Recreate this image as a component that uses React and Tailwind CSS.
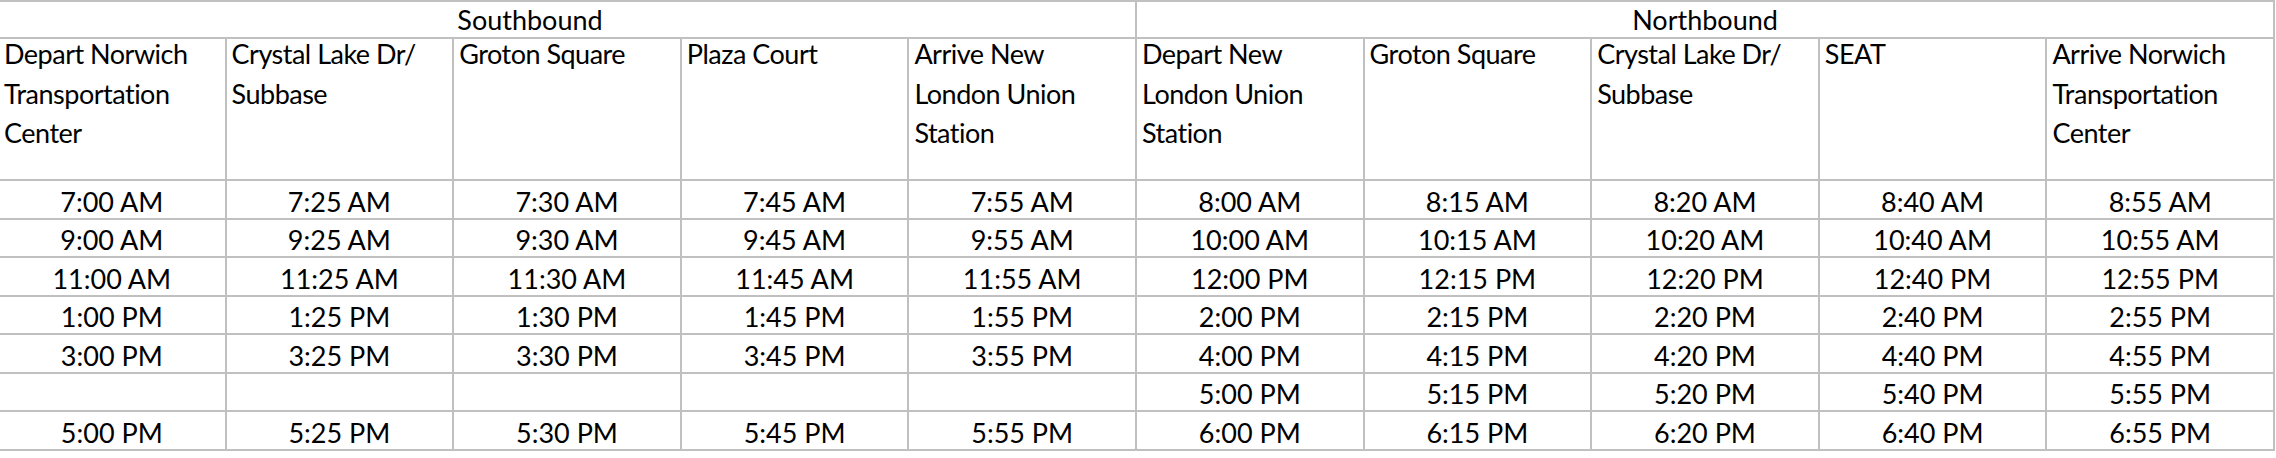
import React from 'react';

const headers = [
  ['Depart Norwich', 'Transportation', 'Center'],
  ['Crystal Lake Dr/', 'Subbase'],
  ['Groton Square'],
  ['Plaza Court'],
  ['Arrive New', 'London Union', 'Station'],
  ['Depart New', 'London Union', 'Station'],
  ['Groton Square'],
  ['Crystal Lake Dr/', 'Subbase'],
  ['SEAT'],
  ['Arrive Norwich', 'Transportation', 'Center'],
];

const rows = [
  ['7:00 AM', '7:25 AM', '7:30 AM', '7:45 AM', '7:55 AM', '8:00 AM', '8:15 AM', '8:20 AM', '8:40 AM', '8:55 AM'],
  ['9:00 AM', '9:25 AM', '9:30 AM', '9:45 AM', '9:55 AM', '10:00 AM', '10:15 AM', '10:20 AM', '10:40 AM', '10:55 AM'],
  ['11:00 AM', '11:25 AM', '11:30 AM', '11:45 AM', '11:55 AM', '12:00 PM', '12:15 PM', '12:20 PM', '12:40 PM', '12:55 PM'],
  ['1:00 PM', '1:25 PM', '1:30 PM', '1:45 PM', '1:55 PM', '2:00 PM', '2:15 PM', '2:20 PM', '2:40 PM', '2:55 PM'],
  ['3:00 PM', '3:25 PM', '3:30 PM', '3:45 PM', '3:55 PM', '4:00 PM', '4:15 PM', '4:20 PM', '4:40 PM', '4:55 PM'],
  ['', '', '', '', '', '5:00 PM', '5:15 PM', '5:20 PM', '5:40 PM', '5:55 PM'],
  ['5:00 PM', '5:25 PM', '5:30 PM', '5:45 PM', '5:55 PM', '6:00 PM', '6:15 PM', '6:20 PM', '6:40 PM', '6:55 PM'],
];

const rowHeights = ['h-[39px]', 'h-[38px]', 'h-[39px]', 'h-[38px]', 'h-[39px]', 'h-[38px]', 'h-[39px]'];

const App = () => {
  return (
    <div className="w-[2276px] h-[458px] bg-white overflow-hidden text-black text-[27px] font-['Lato',sans-serif]">
      <div className="-ml-px w-[2276px] border-t-2 border-[#c0c0c0]">
        {/* Direction row */}
        <div className="grid grid-cols-2">
          <div className="h-[37px] border-r-2 border-b-2 border-[#c0c0c0] flex items-end justify-center pr-[74px] pb-px leading-[32px]">
            Southbound
          </div>
          <div className="h-[37px] border-r-2 border-b-2 border-[#c0c0c0] flex items-end justify-center pb-px leading-[32px]">
            Northbound
          </div>
        </div>

        {/* Stop names */}
        <div className="grid grid-cols-10">
          {headers.map((lines, i) => (
            <div key={i} className="h-[142px] border-r-2 border-b-2 border-[#c0c0c0] pl-[5px] tracking-[-0.5px]">
              {lines.map((l, j) => (
                <div key={j} className="h-[39.5px] leading-[29px] whitespace-nowrap">{l}</div>
              ))}
            </div>
          ))}
        </div>

        {/* Times */}
        {rows.map((row, r) => (
          <div key={r} className="grid grid-cols-10">
            {row.map((t, c) => (
              <div
                key={c}
                className={`${rowHeights[r]} border-r-2 border-b-2 border-[#c0c0c0] flex items-end justify-center leading-[32px]`}
              >
                {t}
              </div>
            ))}
          </div>
        ))}
      </div>
    </div>
  );
};

export default App;
